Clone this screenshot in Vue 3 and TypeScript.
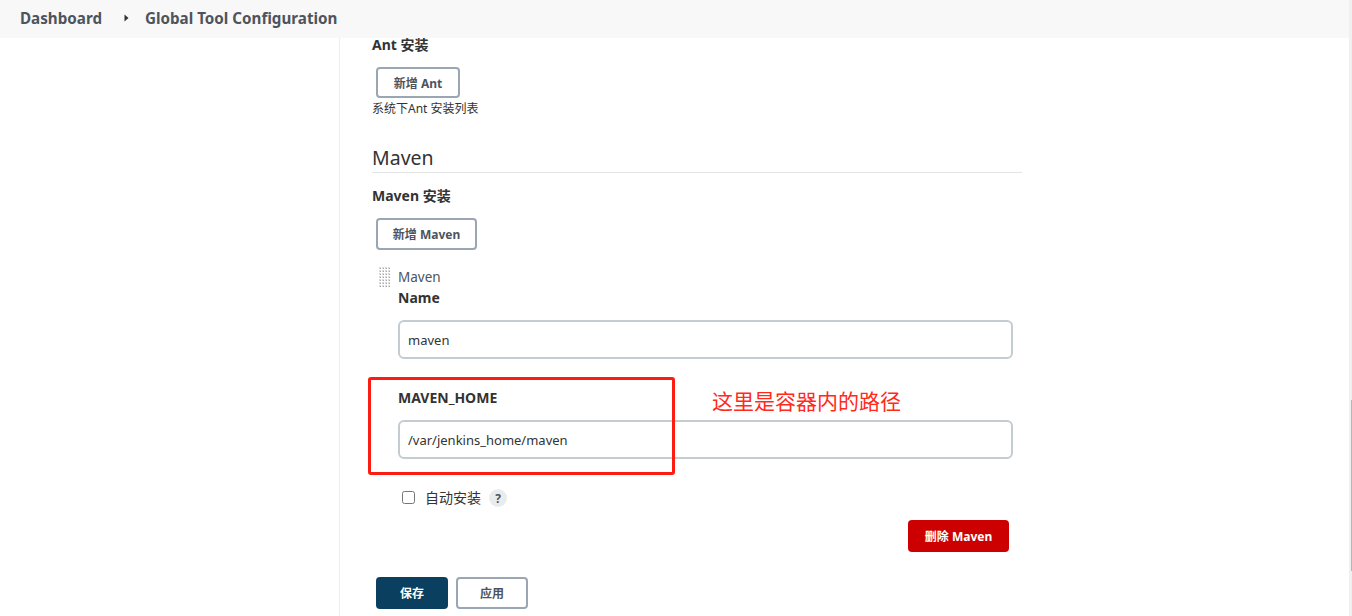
<script setup lang="ts">
import { ref } from 'vue';

const mavenName = ref('maven');
const mavenHome = ref('/var/jenkins_home/maven');
const autoInstall = ref(false);

// drag handle dots, 4 columns by 7 rows
const handleDots: { x: number; y: number }[] = [];
for (let row = 0; row < 7; row++) {
    for (let col = 0; col < 4; col++) {
        handleDots.push({ x: col * 3, y: row * 3 });
    }
}
</script>

<template>
    <div class="page">
        <header class="breadcrumb">
            <a class="crumb">Dashboard</a>
            <svg class="crumb-arrow" width="5" height="8" viewBox="0 0 5 8"><path d="M0.5 0.5 L4.5 4 L0.5 7.5 Z" fill="#333" /></svg>
            <a class="crumb">Global Tool Configuration</a>
        </header>

        <div class="layout">
            <aside class="side"></aside>
            <main class="content">
                <div class="form">
                    <div class="label ant-label">Ant 安装</div>
                    <button class="btn add-ant">新增 Ant</button>
                    <div class="help">系统下Ant 安装列表</div>

                    <h3 class="section">Maven</h3>

                    <div class="label maven-label">Maven 安装</div>
                    <button class="btn add-maven">新增 Maven</button>

                    <div class="item">
                        <svg class="handle" width="12" height="20" viewBox="0 0 12 20">
                            <g v-for="(dot, i) in handleDots" :key="i">
                                <rect :x="dot.x" :y="dot.y" width="2" height="2" fill="#dcdcdc" />
                                <rect :x="dot.x + 1" :y="dot.y + 1" width="1" height="1" fill="#a6a6a6" />
                            </g>
                        </svg>
                        <div class="item-body">
                            <div class="item-title">Maven</div>
                            <div class="label name-label">Name</div>
                            <input v-model="mavenName" class="input" type="text">
                            <div class="label home-label">MAVEN_HOME</div>
                            <input v-model="mavenHome" class="input" type="text">
                            <div class="auto">
                                <input v-model="autoInstall" class="check" type="checkbox">
                                <span class="auto-text">自动安装</span>
                                <span class="help-icon">?</span>
                            </div>
                            <div class="delete-row">
                                <button class="btn danger">删除 Maven</button>
                            </div>
                        </div>
                    </div>

                    <div class="actions">
                        <button class="btn primary">保存</button>
                        <button class="btn apply">应用</button>
                    </div>
                </div>
            </main>
        </div>

        <!-- annotation drawn on top of the screenshot -->
        <div class="note-box"></div>
        <div class="note-text">这里是容器内的路径</div>

        <div class="scroll-track"><div class="scroll-thumb"></div></div>
    </div>
</template>

<style scoped>
.page {
    position: relative;
    width: 1352px;
    height: 616px;
    overflow: hidden;
    background: #fff;
    color: #333;
    font-family: "Noto Sans", "Noto Sans CJK SC", sans-serif;
    font-size: 14px;
}
.breadcrumb {
    display: flex;
    align-items: center;
    height: 38px;
    padding: 0 0 3px 20px;
    box-sizing: border-box;
    background: #f8f8f8;
}
.crumb {
    font-size: 15.2px;
    font-weight: 700;
    color: #4d545d;
}
.crumb-arrow {
    margin: 0 16px 0 22px;
}
.layout {
    display: flex;
    height: 578px;
}
.side {
    width: 339px;
    flex: none;
    border-right: 1px solid #efefef;
}
.content {
    flex: 1;
    padding-left: 32px;
}
.form {
    width: 650px;
}
.label {
    font-size: 14px;
    font-weight: 700;
    line-height: 18px;
    color: #333;
}
.ant-label {
    margin-top: -2px;
}
.btn {
    display: block;
    box-sizing: border-box;
    padding: 0;
    border: 2px solid #9aa7b2;
    border-radius: 4px;
    background: #fff;
    color: #4d545d;
    font-family: inherit;
    font-size: 12px;
    font-weight: 700;
}
.add-ant {
    width: 84px;
    height: 31px;
    margin: 13px 0 0 4px;
}
.help {
    margin-top: 3px;
    font-size: 12px;
    line-height: 16px;
}
.section {
    margin: 29px 0 0;
    padding-bottom: 3px;
    border-bottom: 1px solid #e2e4e6;
    font-size: 19.5px;
    font-weight: 400;
    line-height: 23px;
}
.maven-label {
    margin-top: 14px;
}
.add-maven {
    width: 101px;
    height: 32px;
    margin: 13px 0 0 4px;
}
.item {
    display: flex;
    margin-top: 17px;
}
.handle {
    display: block;
    flex: none;
    margin-left: 7px;
}
.item-body {
    width: 615px;
    margin-left: 7px;
}
.item-title {
    font-size: 13.5px;
    line-height: 20px;
    color: #4d545d;
}
.name-label {
    margin-top: 1px;
    line-height: 20px;
}
.input {
    display: block;
    box-sizing: border-box;
    width: 615px;
    height: 39px;
    margin: 12px 0 0;
    padding: 0 8px;
    border: 2px solid #c3ccd1;
    border-radius: 6px;
    background: #fff;
    outline: none;
    color: #333;
    font-family: inherit;
    font-size: 13px;
}
.home-label {
    margin-top: 30px;
    line-height: 18px;
}
.home-label + .input {
    margin-top: 13px;
}
.auto {
    display: flex;
    align-items: center;
    height: 18px;
    margin-top: 30px;
}
.check {
    width: 13px;
    height: 13px;
    margin: 0 0 2px 4px;
}
.auto-text {
    margin-left: 10px;
    font-size: 14px;
    line-height: 18px;
}
.help-icon {
    display: flex;
    align-items: center;
    justify-content: center;
    width: 18px;
    height: 18px;
    margin-left: 8px;
    border-radius: 50%;
    background: #e9eced;
    color: #4d545d;
    font-size: 12px;
    font-weight: 700;
}
.delete-row {
    display: flex;
    justify-content: flex-end;
    padding-right: 4px;
    margin-top: 13px;
}
.danger {
    width: 101px;
    height: 32px;
    border: none;
    background: #cc0000;
    color: #fff;
}
.actions {
    display: flex;
    gap: 8px;
    margin: 25px 0 0 4px;
}
.primary,
.apply {
    width: 72px;
    height: 32px;
}
.primary {
    border: none;
    background: #0b3f60;
    color: #fff;
}
.note-box {
    position: absolute;
    left: 368px;
    top: 377px;
    width: 307px;
    height: 98px;
    box-sizing: border-box;
    border: 3px solid #fb1c12;
    border-radius: 3px;
}
.note-text {
    position: absolute;
    left: 712px;
    top: 387px;
    font-size: 21px;
    line-height: 28px;
    color: #ff2a1a;
}
.scroll-track {
    position: absolute;
    right: 0;
    top: 0;
    width: 3px;
    height: 616px;
    background: #f0f0f0;
}
.scroll-thumb {
    position: absolute;
    right: 0;
    top: 400px;
    width: 1px;
    height: 171px;
    background: #b5b5b5;
}
</style>
